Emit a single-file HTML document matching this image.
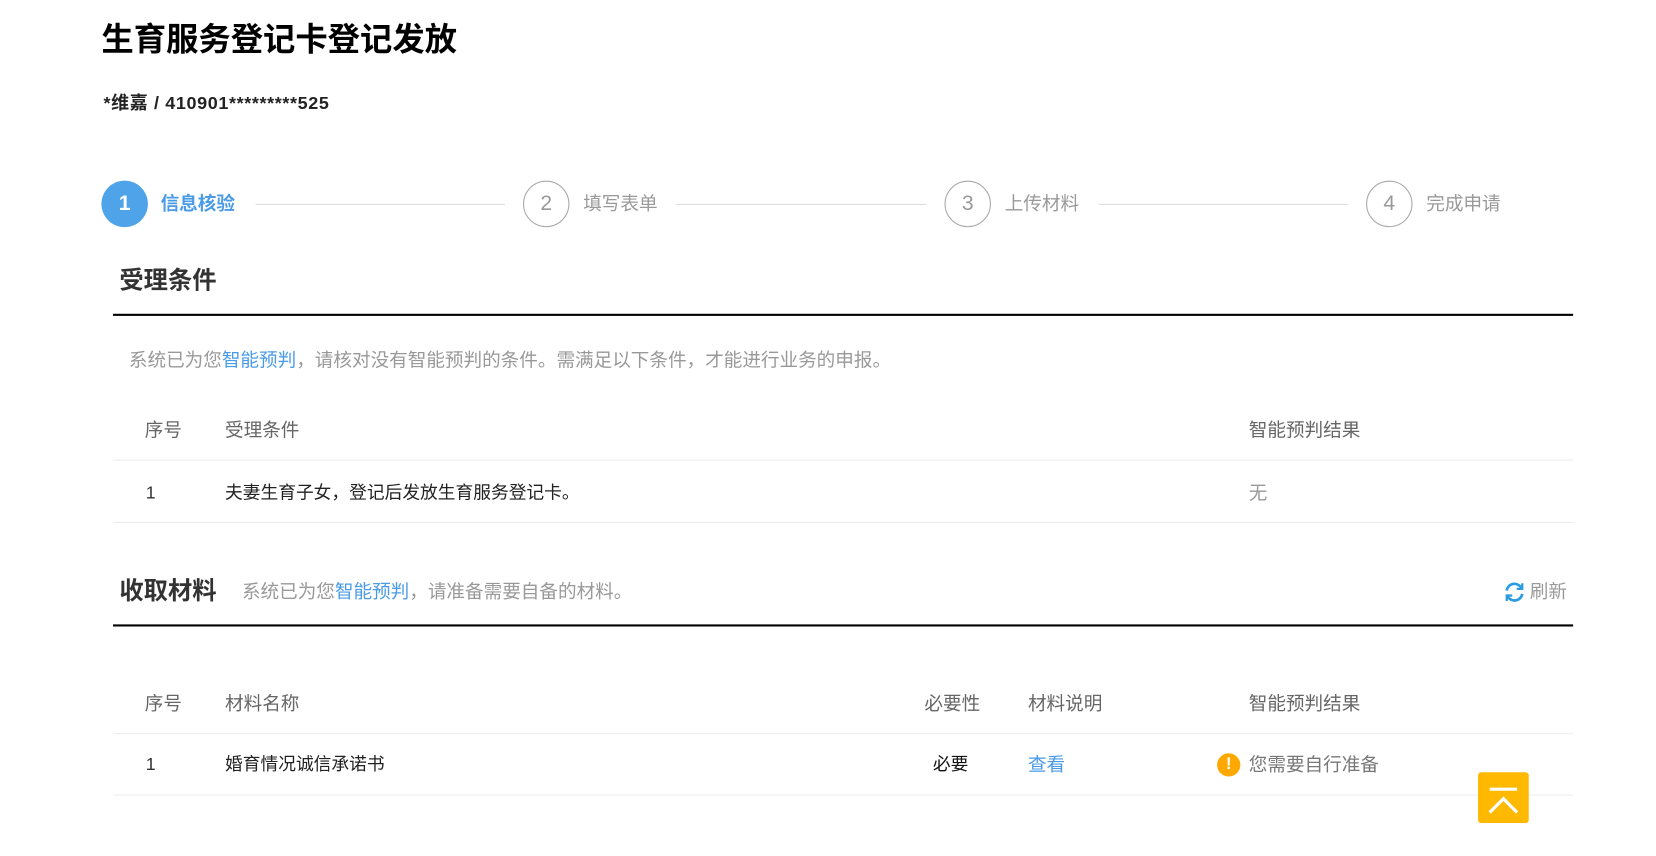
<!DOCTYPE html>
<html><head><meta charset="utf-8"><style>
html,body{margin:0;padding:0;background:#fff;overflow:hidden;width:1656px;height:855px}
#w{position:absolute;left:0;top:0;width:1570px;height:810px;transform:scale(1.0565);transform-origin:0 0;font-family:"Liberation Sans","Noto Sans CJK SC",sans-serif}
.a{position:absolute;white-space:nowrap;line-height:1}
.g{color:#999}.b{color:#4a9be6}
.c{position:absolute;width:44px;height:44px;border-radius:50%;box-sizing:border-box;border:1px solid #aaa;color:#999;font-size:20px;text-align:center;line-height:42px}
.l{position:absolute;height:1px;background:#ddd}
.hr{position:absolute;left:107px;width:1382px;height:2px;background:#000}
.tl{position:absolute;left:107px;width:1382px;height:1px;background:#ececec}
.f{font-size:17.6px}
.r{font-size:16.8px}
</style></head><body><div id="w">
<div class="a" style="left:96px;top:23px;font-size:30.6px;font-weight:bold;color:#000">生育服务登记卡登记发放</div>
<div class="a" style="left:98px;top:89px;font-size:17px;font-weight:bold;color:#222;letter-spacing:0.6px">*维嘉 / 410901*********525</div>

<div class="c" style="left:96px;top:171px;background:#4fa3e8;border:none;color:#fff;line-height:44px;font-weight:bold">1</div>
<div class="a f b" style="left:152px;top:185px;font-weight:bold">信息核验</div>
<div class="l" style="left:242px;top:193px;width:236px"></div>
<div class="c" style="left:495px;top:171px">2</div>
<div class="a f g" style="left:552px;top:185px">填写表单</div>
<div class="l" style="left:640px;top:193px;width:237px"></div>
<div class="c" style="left:894px;top:171px">3</div>
<div class="a f g" style="left:951px;top:185px">上传材料</div>
<div class="l" style="left:1040px;top:193px;width:236px"></div>
<div class="c" style="left:1293px;top:171px">4</div>
<div class="a f g" style="left:1350px;top:185px">完成申请</div>

<div class="a" style="left:113px;top:254px;font-size:23px;font-weight:bold;color:#333">受理条件</div>
<div class="hr" style="top:297px"></div>
<div class="a f g" style="left:122px;top:333px">系统已为您<span class="b">智能预判</span>，请核对没有智能预判的条件。需满足以下条件，才能进行业务的申报。</div>
<div class="a f" style="left:137px;top:399px;color:#666">序号</div>
<div class="a f" style="left:213px;top:399px;color:#666">受理条件</div>
<div class="a f" style="left:1182px;top:399px;color:#666">智能预判结果</div>
<div class="tl" style="top:435px"></div>
<div class="a r" style="left:138px;top:459px;color:#333">1</div>
<div class="a r" style="left:213px;top:459px;color:#222">夫妻生育子女，登记后发放生育服务登记卡。</div>
<div class="a f g" style="left:1182px;top:459px">无</div>
<div class="tl" style="top:494px"></div>

<div class="a" style="left:113px;top:548px;font-size:23px;font-weight:bold;color:#333">收取材料</div>
<div class="a f g" style="left:229px;top:552px">系统已为您<span class="b">智能预判</span>，请准备需要自备的材料。</div>
<svg class="a" style="left:1423px;top:550px" width="21" height="21" viewBox="0 0 20 20" fill="none" stroke="#2a9be0" stroke-width="2.4"><path d="M3 8.5A7 7 0 0 1 16 6"/><path d="M17 11.5A7 7 0 0 1 4 14"/><path d="M17 2v5h-5M3 18v-5h5" stroke-width="2"/></svg>
<div class="a f g" style="left:1448px;top:552px">刷新</div>
<div class="hr" style="top:591px"></div>
<div class="a f" style="left:137px;top:658px;color:#666">序号</div>
<div class="a f" style="left:213px;top:658px;color:#666">材料名称</div>
<div class="a f" style="left:875px;top:658px;color:#666">必要性</div>
<div class="a f" style="left:973px;top:658px;color:#666">材料说明</div>
<div class="a f" style="left:1182px;top:658px;color:#666">智能预判结果</div>
<div class="tl" style="top:694px"></div>
<div class="a r" style="left:138px;top:716px;color:#333">1</div>
<div class="a r" style="left:213px;top:716px;color:#222">婚育情况诚信承诺书</div>
<div class="a r" style="left:883px;top:716px;color:#111">必要</div>
<div class="a f b" style="left:973px;top:716px">查看</div>
<div class="a" style="left:1152px;top:713px;width:22px;height:22px;border-radius:50%;background:#ffa800;color:#fff;font-weight:bold;font-size:16px;text-align:center;line-height:22px">!</div>
<div class="a f" style="left:1182px;top:716px;color:#777">您需要自行准备</div>
<div class="tl" style="top:752px"></div>
<div class="a" style="left:1399px;top:731px;width:48px;height:48px;background:#ffb900;border-radius:3px"><svg width="48" height="48"><path d="M11 16h26" stroke="#fff" stroke-width="3"/><path d="M11 38L24 25L37 38" stroke="#fff" stroke-width="3" fill="none"/></svg></div>
</div></body></html>
